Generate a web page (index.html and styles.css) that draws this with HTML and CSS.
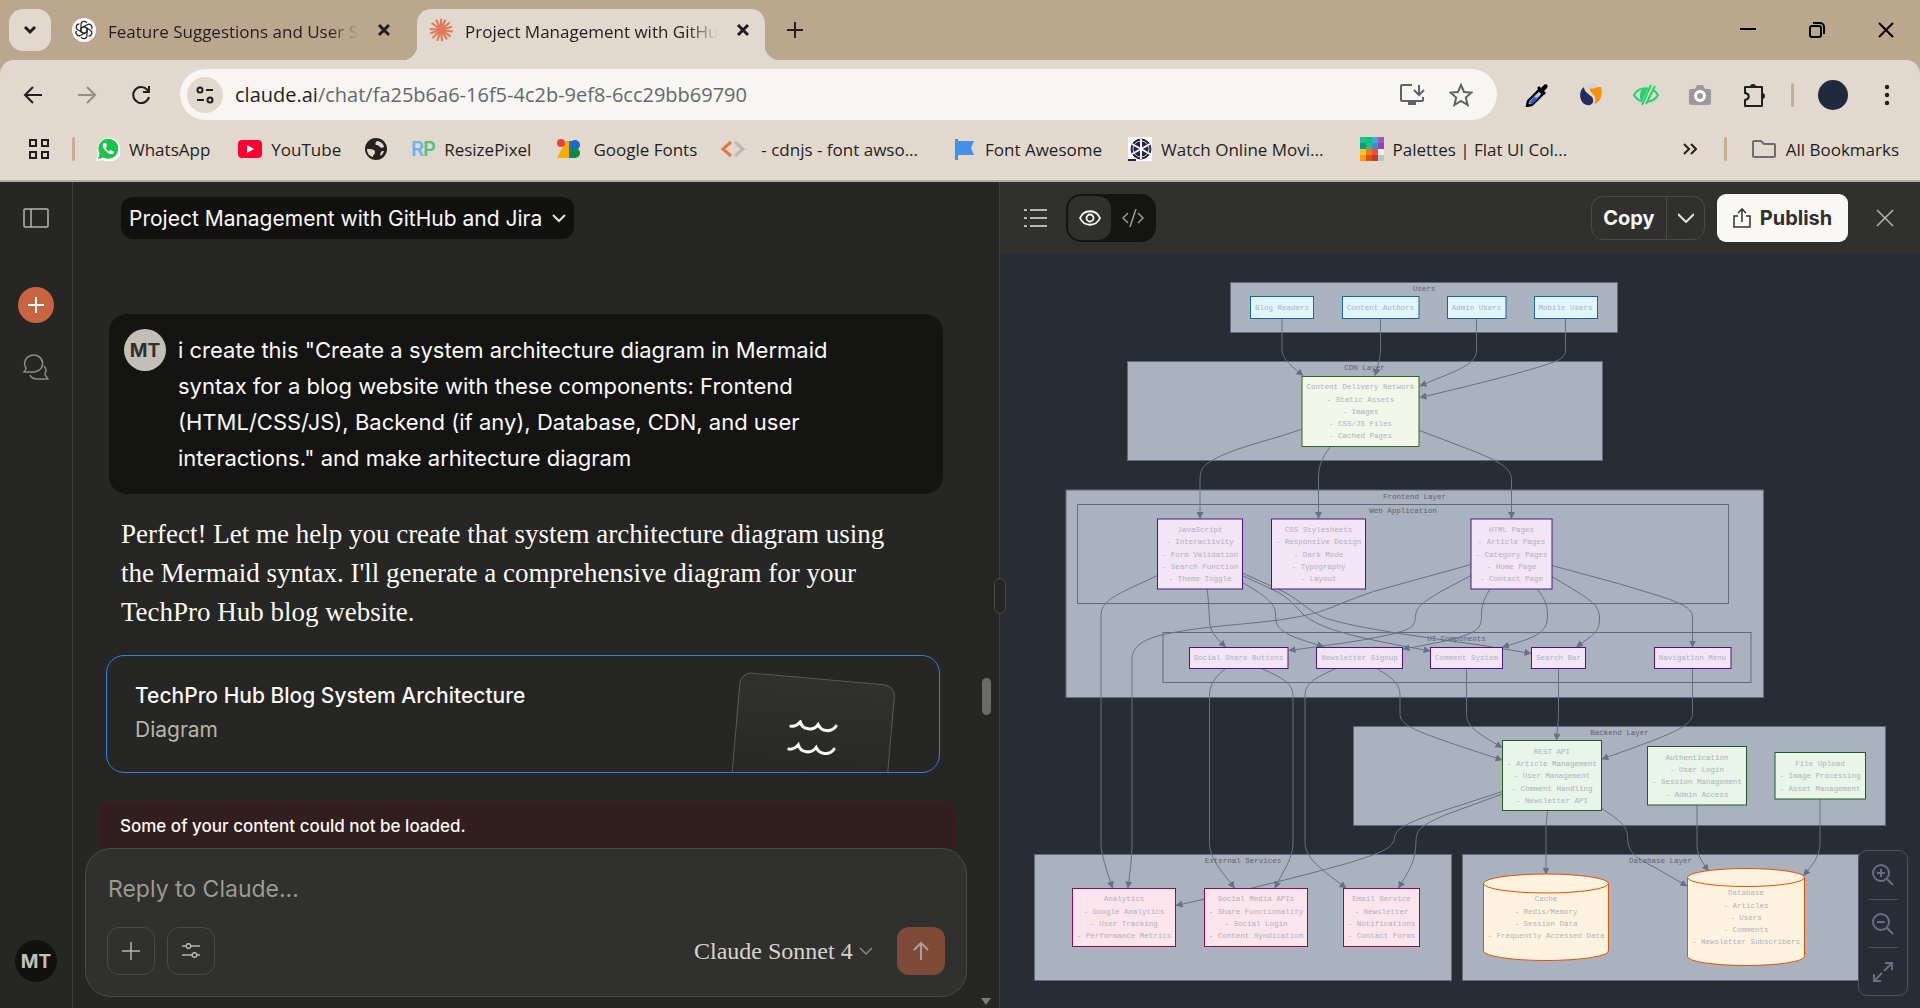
FILE: index.html
```html
<!DOCTYPE html>
<html lang="en">
<head>
<meta charset="utf-8">
<meta name="viewport" content="width=device-width, initial-scale=1">
<title>Project Management with GitHub and Jira</title>
<link rel="stylesheet" href="styles.css">
</head>
<body>
<header class="browser">
  <div class="tabstrip">
    <button class="tab-search" aria-label="Search tabs"><svg width="16" height="16" viewBox="0 0 16 16"><path d="M3 5l5 5 5-5" class="ink heavy"/></svg></button>
    <div class="tab">
      <svg width="24" height="24" viewBox="0 0 24 24"><circle cx="12" cy="12" r="12" fill="#fff"/><g fill="none" stroke="#222" stroke-width="1.2"><path id="petal" d="M9 10.300V6.500a3.200 3.200 0 0 1 6-1.500M9 10.300l3-1.800 3.500 2"/><use href="#petal" transform="rotate(60 12 12)"/><use href="#petal" transform="rotate(120 12 12)"/><use href="#petal" transform="rotate(180 12 12)"/><use href="#petal" transform="rotate(240 12 12)"/><use href="#petal" transform="rotate(300 12 12)"/></g></svg>
      <a class="tab-title" href="#">Feature Suggestions and User S</a>
      <button class="tab-close" aria-label="Close tab"><svg width="14" height="14" viewBox="0 0 14 14"><path d="M2 2l10 10M12 2L2 12" class="ink heavy"/></svg></button>
    </div>
    <div class="tab active">
      <svg width="24" height="24" viewBox="0 0 24 24"><g stroke="#e07a5a" stroke-width="2.200" stroke-linecap="round"><path d="M12 12V1.500M12 12l4-9.500M12 12l8-7M12 12l10-3M12 12l11 1.500M12 12l9 6M12 12l5.500 8.500M12 12l1 10.500M12 12l-3.500 10M12 12l-8 7.500M12 12L2 15M12 12L1.500 11M12 12L3.500 5.500M12 12L7.500 2.500"/></g></svg>
      <a class="tab-title" href="#">Project Management with GitHu</a>
      <button class="tab-close" aria-label="Close tab"><svg width="14" height="14" viewBox="0 0 14 14"><path d="M2 2l10 10M12 2L2 12" class="ink heavy"/></svg></button>
    </div>
    <button class="new-tab" aria-label="New tab"><svg width="18" height="18" viewBox="0 0 18 18"><path d="M9 1v16M1 9h16" class="ink"/></svg></button>
    <div class="window-controls">
      <button aria-label="Minimize"><svg width="16" height="16" viewBox="0 0 16 16"><path d="M0 7h16" class="ink black"/></svg></button>
      <button aria-label="Restore"><svg width="16" height="16" viewBox="0 0 16 16"><rect x="1" y="4" width="11" height="11" rx="2" class="ink black"/><path d="M4 1h7a4 4 0 0 1 4 4v7" class="ink black"/></svg></button>
      <button aria-label="Close"><svg width="16" height="16" viewBox="0 0 16 16"><path d="M1 1l14 14M15 1L1 15" class="ink black"/></svg></button>
    </div>
  </div>

  <div class="toolbar">
    <button class="nav-button" aria-label="Back"><svg width="20" height="20" viewBox="0 0 20 20"><path d="M19 10H2M10 2l-8 8 8 8" class="ink"/></svg></button>
    <button class="nav-button faded" aria-label="Forward"><svg width="20" height="20" viewBox="0 0 20 20"><path d="M1 10h17M10 2l8 8-8 8" class="ink"/></svg></button>
    <button class="nav-button" aria-label="Reload"><svg width="20" height="20" viewBox="0 0 20 20"><path d="M18 12a8 8 0 1 1-2-7.500l2 2M18 1v6h-6" class="ink"/></svg></button>
    <div class="omnibox">
      <button class="site-info" aria-label="Site information"><svg width="20" height="20" viewBox="0 0 20 20"><g class="ink"><circle cx="5" cy="5" r="2.500"/><path d="M11 5h7M2 15h7"/><circle cx="15" cy="15" r="2.500"/></g></svg></button>
      <a class="address" href="#"><span>claude.ai</span>/chat/fa25b6a6-16f5-4c2b-9ef8-6cc29bb69790</a>
      <button class="omni-action" aria-label="Install app"><svg width="26" height="24" viewBox="0 0 26 24"><g fill="none" stroke="#5f6368" stroke-width="2"><path d="M13 2H3a1 1 0 0 0-1 1v14a1 1 0 0 0 1 1h20a1 1 0 0 0 1-1v-3M20 2v9M15 7l5 5 5-5"/></g><path d="M9 18h8v4H9z" fill="#5f6368"/></svg></button>
      <button class="omni-action" aria-label="Bookmark this tab"><svg width="24" height="24" viewBox="0 0 24 24"><path d="M12 2l3 7 7.500.600-5.700 5 1.800 7.400-6.600-4-6.600 4 1.800-7.400-5.700-5L9 9z" fill="none" stroke="#5f6368" stroke-width="2"/></svg></button>
    </div>
    <div class="extensions">
      <button aria-label="Color picker"><svg width="24" height="24" viewBox="0 0 24 24"><path d="M2 23l1-5L14 7l4 4L7 22z" fill="#b9c6f5" stroke="#000" stroke-width="2.400"/><path d="M4 20l5-6 5 1-7 6z" fill="#3557d6"/><path d="M12 5l2-2 2 2 3-3c2-2 5 1 3 3l-3 3 2 2-2 2z" fill="#000"/></svg></button>
      <button aria-label="Similar sites"><svg width="24" height="24" viewBox="0 0 24 24"><path d="M5 4c-6 4-5 16 3 18 5 1 8-4 5-8-3-3-8-5-8-10z" fill="#232c5c"/><path d="M11 4h11c2 8 0 15-7 17 3-5 1-8-2-11-2-2-3-4-2-6z" fill="#f79009"/><path d="M8 4c3-5 10-4 11 0-4 2-8 2-11 0z" fill="#cfd3d6"/></svg></button>
      <button aria-label="Hide elements"><svg width="26" height="24" viewBox="0 0 26 24"><path d="M1 12C6 3 20 3 25 12 20 21 6 21 1 12z" fill="none" stroke="#22d36b" stroke-width="2"/><path d="M15 5c-10-1-9 11-6 14z" fill="#22d36b"/><path d="M20 2L10 22" stroke="#e1d9cd" stroke-width="5"/><path d="M18 2L9 22M22 3l-9 18" stroke="#22d36b" stroke-width="2"/></svg></button>
      <button aria-label="Screenshot"><svg width="24" height="24" viewBox="0 0 24 24"><rect x="1" y="6" width="22" height="16" rx="2" fill="#999"/><path d="M7 6l2-4h6l2 4z" fill="#999"/><circle cx="12" cy="13" r="4.500" fill="#999" stroke="#fff" stroke-width="3"/></svg></button>
      <button aria-label="Extensions"><svg width="26" height="26" viewBox="0 0 26 26"><path d="M4 5h17v19H4v-6c5-1 5-6 0-7z" class="ink" stroke-linejoin="round"/><path d="M9 5a3 3 0 0 1 6 0zM21 11a3 3 0 0 1 0 6z" fill="#1f1f1f"/></svg></button>
    </div>
    <span class="divider"></span>
    <button class="profile" aria-label="Profile"></button>
    <button class="kebab" aria-label="Menu"><svg width="6" height="22" viewBox="0 0 6 22"><g fill="#1f1f1f"><circle cx="3" cy="3" r="2.200"/><circle cx="3" cy="11" r="2.200"/><circle cx="3" cy="19" r="2.200"/></g></svg></button>
  </div>

  <nav class="bookmarks">
    <button class="apps" aria-label="Apps"><svg width="22" height="22" viewBox="0 0 22 22"><g class="ink"><rect x="2" y="2" width="6" height="6"/><rect x="14" y="2" width="6" height="6"/><rect x="2" y="14" width="6" height="6"/><rect x="14" y="14" width="6" height="6"/></g></svg></button>
    <span class="divider"></span>
    <a class="bm b-wa" href="#"><svg width="24" height="24" viewBox="0 0 24 24"><path d="M0 24l2-7A12 12 0 1 1 7 23z" fill="#fff"/><path d="M2 22l1.500-5.500a10 10 0 1 1 4 4z" fill="#1fc14d"/><path d="M8 6c-3 2 0 7 3 9 3 3 6 3 7 0l-3-2-2 1.500c-1-.5-3-2-3.500-4L11 9 10 6z" fill="#fff"/></svg>WhatsApp</a>
    <a class="bm b-yt" href="#"><svg width="24" height="24" viewBox="0 0 24 24"><rect y="3" width="24" height="18" rx="4" fill="#f03"/><path d="M9 8v8l7-4z" fill="#fff"/></svg>YouTube</a>
    <a class="bm b-globe" href="#" aria-label="Website"><svg width="22" height="22" viewBox="0 0 22 22"><circle cx="11" cy="11" r="11" fill="#222"/><path d="M2 11c4 0 8 0 8 3s-2 2-2 5c-4-1-6-4-6-8zM12 3c-2 2-2 3-1 4 3 0 3 1 5 3l3-1c0-3-4-6-7-6zM15 18c1-3 0-5 4-5-1 3-2 4-4 5z" fill="#e1d9cd"/></svg></a>
    <a class="bm b-rp" href="#"><svg width="26" height="24" viewBox="0 0 26 24"><text x="0" y="19" font-size="20" font-family="Inter, sans-serif" font-weight="600" fill="#69b5f0">R</text><text x="12" y="19" font-size="20" font-family="Inter, sans-serif" font-weight="600" fill="#58c27c">P</text></svg>ResizePixel</a>
    <a class="bm b-gf" href="#"><svg width="24" height="24" viewBox="0 0 24 24"><path d="M0 21L9 4h5v17z" fill="#f9ab00"/><circle cx="4" cy="6" r="4" fill="#ea4335"/><path d="M12 4h5v17h-5z" fill="#1a73e8"/><circle cx="18" cy="8" r="5" fill="#1967d2"/><circle cx="18" cy="16" r="5" fill="#0d8c3f"/></svg>Google Fonts</a>
    <a class="bm b-cdn" href="#"><svg width="24" height="24" viewBox="0 0 24 24"><path d="M10 5l-8 7 8 7" fill="none" stroke="#e8744a" stroke-width="3"/><path d="M14 5l8 7-8 7" fill="none" stroke="#bdb9b4" stroke-width="3"/></svg>- cdnjs - font awso...</a>
    <a class="bm b-fa" href="#"><svg width="22" height="24" viewBox="0 0 22 24"><path d="M1 2h3v2h16l-3 7 3 7H4v5H1z" fill="#4291e6"/></svg>Font Awesome</a>
    <a class="bm b-mov" href="#"><svg width="24" height="24" viewBox="0 0 24 24"><rect width="24" height="24" fill="#fff"/><circle cx="13" cy="12" r="10" fill="#1f2550" stroke="#222" stroke-width="1"/><path d="M13 2v20M4 7l18 10M22 7L4 17" stroke="#fff" stroke-width="2"/><circle cx="13" cy="12" r="8" fill="none" stroke="#ccd" stroke-width="1"/><path d="M0 23h8" stroke="#1f2550" stroke-width="2"/></svg>Watch Online Movi...</a>
    <a class="bm b-pal" href="#"><svg width="24" height="24" viewBox="0 0 24 24" shape-rendering="crispEdges"><path d="M0 0h6v6H0z" fill="#1abc9c"/><path d="M6 0h6v6H6z" fill="#00cc6f"/><path d="M12 0h6v6h-6z" fill="#3fa9e5"/><path d="M18 0h6v6h-6z" fill="#9b59b6"/><path d="M0 6h6v6H0z" fill="#00a085"/><path d="M6 6h6v6H6z" fill="#3fb57b"/><path d="M12 6h6v6h-6z" fill="#3a93c8"/><path d="M18 6h6v6h-6z" fill="#8e44ad"/><path d="M0 12h6v6H0z" fill="#fdc32d"/><path d="M6 12h6v6H6z" fill="#e67e22"/><path d="M12 12h6v6h-6z" fill="#fa4b3a"/><path d="M18 12h6v6h-6z" fill="#ecf0f1"/><path d="M0 18h6v6H0z" fill="#ff9d12"/><path d="M6 18h6v6H6z" fill="#dc5600"/><path d="M12 18h6v6h-6z" fill="#cb3a24"/><path d="M18 18h6v6h-6z" fill="#bdc3c7"/></svg>Palettes | Flat UI Col...</a>
    <button class="overflow" aria-label="More bookmarks"><svg width="16" height="14" viewBox="0 0 16 14"><path d="M2 2l5 5-5 5M9 2l5 5-5 5" class="ink"/></svg></button>
    <span class="divider"></span>
    <a class="bm all" href="#"><svg width="26" height="20" viewBox="0 0 26 20"><path d="M2 3a1 1 0 0 1 1-1h7l3 3h10a1 1 0 0 1 1 1v11a1 1 0 0 1-1 1H3a1 1 0 0 1-1-1z" fill="none" stroke="#6b6d70" stroke-width="2"/></svg>All Bookmarks</a>
  </nav>
</header>

<main class="app">
  <nav class="sidebar">
    <button class="side-icon toggle" aria-label="Toggle sidebar"><svg width="26" height="20" viewBox="0 0 26 20"><g class="line"><rect x="1" y="1" width="24" height="18" rx="1"/><path d="M8 1v18"/></g></svg></button>
    <button class="new-chat" aria-label="New chat"><svg width="16" height="16" viewBox="0 0 16 16"><path d="M8 0v16M0 8h16" stroke="#fff" stroke-width="2"/></svg></button>
    <button class="side-icon" aria-label="Chats"><svg width="26" height="26" viewBox="0 0 26 26"><g class="line dim"><path d="M1 18h9a9 8.500 0 1 0-7-4c0 2-1 3-2 4z"/><path d="M21 12c3 3 2 6 1 8 0 2 2 3 3 5H15c-4 0-7-1-8-4"/></g></svg></button>
    <button class="account">MT</button>
  </nav>

  <section class="chat">
    <header class="chat-header">
      <button class="chat-title">Project Management with GitHub and Jira<svg width="14" height="10" viewBox="0 0 14 10"><path d="M1 2l6 6 6-6" class="chev"/></svg></button>
    </header>
    <div class="thread">
      <article class="bubble">
        <span class="avatar">MT</span>
        <p>i create this "Create a system architecture diagram in Mermaid syntax for a blog website with these components: Frontend (HTML/CSS/JS), Backend (if any), Database, CDN, and user interactions." and make arhitecture diagram</p>
      </article>
      <p class="answer">Perfect! Let me help you create that system architecture diagram using the Mermaid syntax. I'll generate a comprehensive diagram for your TechPro Hub blog website.</p>
      <a class="artifact-card" href="#">
        <span class="artifact-text"><strong>TechPro Hub Blog System Architecture</strong><span>Diagram</span></span>
        <span class="paper"><svg width="50" height="34" viewBox="0 0 50 34"><g fill="none" stroke="#faf9f5" stroke-width="3" stroke-linecap="round"><path id="wave" d="M2 7c4 0 7-2 9-5 3 8 14 8 18 1 4 7 14 7 18 0"/><use href="#wave" y="23"/></g></svg></span>
      </a>
    </div>
    <footer class="composer-area">
      <p class="error">Some of your content could not be loaded.</p>
      <form class="composer">
        <textarea rows="1" aria-label="Message" placeholder="Reply to Claude..."></textarea>
        <div class="composer-row">
          <button type="button" class="tool" aria-label="Add"><svg width="18" height="18" viewBox="0 0 18 18"><path d="M9 0v18M0 9h18" class="line"/></svg></button>
          <button type="button" class="tool" aria-label="Tools"><svg width="18" height="16" viewBox="0 0 18 16"><g class="line"><path d="M0 3h4M9 3h9M0 12h10M15 12h3"/><circle cx="6.500" cy="3" r="2.300"/><circle cx="12.500" cy="12" r="2.300"/></g></svg></button>
          <div class="model"><select aria-label="Model"><option>Claude Sonnet 4</option></select><svg width="14" height="10" viewBox="0 0 14 10"><path d="M1 2l6 6 6-6" class="chev muted"/></svg></div>
          <button type="button" class="send" aria-label="Send"><svg width="18" height="20" viewBox="0 0 18 20"><path d="M9 19V2M2 9l7-7 7 7" fill="none" stroke="#a9a196" stroke-width="2"/></svg></button>
        </div>
      </form>
    </footer>
    <span class="scroll-thumb"></span>
    <span class="scroll-arrow"></span>
    <span class="resize-handle"></span>
  </section>

  <section class="artifact">
    <header class="artifact-header">
      <button class="plain" aria-label="Artifacts"><svg width="24" height="20" viewBox="0 0 24 20"><g class="line bold"><path d="M6 2h17M6 10h17M6 18h17M0 2h3M0 10h3M0 18h3"/></g></svg></button>
      <div class="view-switch">
        <button class="on" aria-label="Preview"><svg width="22" height="16" viewBox="0 0 22 16"><g fill="none" stroke="#faf9f5" stroke-width="1.800"><path d="M1 8c4-9 16-9 20 0-4 9-16 9-20 0z"/><circle cx="11" cy="8" r="3.500"/></g></svg></button>
        <button aria-label="Code"><svg width="22" height="18" viewBox="0 0 22 18"><path d="M6 4L1 9l5 5M16 4l5 5-5 5M14 0L8 18" fill="none" stroke="#9c9a92" stroke-width="1.500"/></svg></button>
      </div>
      <div class="copy-group">
        <button class="copy">Copy</button><button class="more" aria-label="More options"><svg width="16" height="10" viewBox="0 0 16 10"><path d="M0 1l8 8 8-8" class="chev"/></svg></button>
      </div>
      <button class="publish"><svg width="18" height="20" viewBox="0 0 18 20"><path d="M5 8H1v11h16V8h-4M9 14V1M5 5l4-4 4 4" fill="none" stroke="#30302e" stroke-width="1.500"/></svg>Publish</button>
      <button class="plain close" aria-label="Close"><svg width="18" height="18" viewBox="0 0 18 18"><path d="M1 1l16 16M17 1L1 17" class="line"/></svg></button>
    </header>
    <div class="canvas">
      <svg class="diagram" viewBox="0 0 1840 1508" role="img" aria-label="TechPro Hub Blog System Architecture">
        <defs><marker id="arrow" markerUnits="userSpaceOnUse" markerWidth="14" markerHeight="14" refX="13" refY="7" orient="auto"><path d="M0 0l14 7-14 7z" fill="#667085"/></marker></defs>
        <g class="cluster">
          <rect x="461" y="57" width="774" height="100"/>
          <rect x="255" y="215" width="950" height="198"/>
          <rect x="132" y="472" width="1395" height="415"/>
          <rect x="155" y="501" width="1302" height="198"/>
          <rect x="326" y="757" width="1176" height="100"/>
          <rect x="707" y="945" width="1064" height="198"/>
          <rect x="69" y="1201" width="834" height="252"/>
          <rect x="925" y="1201" width="792" height="252"/>
        </g>
        <g class="edge">
          <path d="M564 129V189C564 206 573 217 606 243"/>
          <path d="M761 129V190C761 205 757 220 750 243"/>
          <path d="M953 129V193C953 225 900 237 840 264"/>
          <path d="M1131 129V193C1131 205 1122 211 1102 218C1060 233 960 259 840 287"/>
          <path d="M604 350C560 367 480 385 441 404C408 420 400 428 400 452V529"/>
          <path d="M661 385C641 412 637 425 637 452V529"/>
          <path d="M839 353L939 391C1000 415 1023 428 1023 452V529"/>
          <path d="M315 643L257 670C215 690 202 702 202 725V1179C202 1200 214 1235 225 1268"/>
          <path d="M414 670C417 690 418 715 419 730C420 755 427 762 451 786"/>
          <path d="M485 657C520 678 551 695 551 720C551 750 560 760 647 785"/>
          <path d="M485 643L547 672C580 688 590 705 606 720C640 750 700 765 860 794"/>
          <path d="M485 638L560 672C600 690 615 715 653 729C720 750 860 768 960 782L1062 799"/>
          <path d="M942 621L747 675C680 698 660 710 627 719C540 741 440 739 347 757C285 768 264 785 264 812V1179C264 1210 260 1235 256 1268"/>
          <path d="M942 643L880 676C840 700 832 708 831 725C829 745 825 750 780 761C720 775 650 783 578 793"/>
          <path d="M980 670C965 695 963 705 963 725C963 755 950 765 806 790"/>
          <path d="M1075 670C1090 692 1095 702 1095 722C1095 755 1080 765 1005 786"/>
          <path d="M1104 645L1155 676C1190 698 1199 708 1199 730C1199 757 1185 762 1153 786"/>
          <path d="M1104 623L1240 660C1330 688 1385 700 1385 725V786"/>
          <path d="M451 829C425 850 419 865 419 885V1175C419 1210 440 1230 469 1268"/>
          <path d="M523 829C570 850 586 860 586 885V1179C586 1210 565 1235 550 1268"/>
          <path d="M672 829C625 850 610 860 610 885V1175C610 1205 630 1222 692 1268"/>
          <path d="M753 829C790 850 800 862 800 885V919C800 945 830 955 1004 1012"/>
          <path d="M933 829V919C933 945 950 955 1004 987"/>
          <path d="M1117 829V925L1113 972"/>
          <path d="M1385 829V919C1385 945 1345 960 1204 1010"/>
          <path d="M1005 1075L860 1122C800 1143 790 1155 789 1168C786 1185 775 1195 690 1220C590 1248 470 1277 352 1303"/>
          <path d="M1005 1080L890 1122C838 1145 833 1152 832 1175C831 1215 820 1230 797 1268"/>
          <path d="M1095 1113L1092 1145V1240"/>
          <path d="M1203 1109C1240 1132 1254 1145 1255 1165C1256 1195 1265 1205 1310 1227L1374 1264"/>
          <path d="M1394 1102V1179C1394 1200 1400 1210 1417 1234"/>
          <path d="M1640 1090V1179C1640 1200 1630 1217 1607 1243"/>
        </g>
        <g class="users">
          <rect x="501" y="85" width="126" height="44"/>
          <rect x="685" y="85" width="153" height="44"/>
          <rect x="895" y="85" width="117" height="44"/>
          <rect x="1069" y="85" width="126" height="44"/>
        </g>
        <g class="cdn"><rect x="604" y="245" width="234" height="140"/></g>
        <g class="front">
          <rect x="315" y="530" width="170" height="140"/>
          <rect x="543" y="530" width="188" height="140"/>
          <rect x="942" y="530" width="162" height="140"/>
          <rect x="379" y="787" width="197" height="42"/>
          <rect x="633" y="787" width="172" height="42"/>
          <rect x="861" y="787" width="144" height="42"/>
          <rect x="1063" y="787" width="108" height="42"/>
          <rect x="1309" y="787" width="153" height="42"/>
        </g>
        <g class="back">
          <rect x="1005" y="973" width="198" height="140"/>
          <rect x="1295" y="985" width="198" height="117"/>
          <rect x="1550" y="997" width="181" height="93"/>
        </g>
        <g class="ext">
          <rect x="145" y="1269" width="206" height="116"/>
          <rect x="409" y="1269" width="206" height="116"/>
          <rect x="687" y="1269" width="152" height="116"/>
        </g>
        <g class="store">
          <path d="M967 1259V1394A125 19 0 0 0 1217 1394V1259A125 19 0 0 0 967 1259A125 19 0 0 0 1217 1259"/>
          <path d="M1375 1247V1405A117 18 0 0 0 1609 1405V1247A117 18 0 0 0 1375 1247A117 18 0 0 0 1609 1247"/>
        </g>
        <g class="cluster-label">
          <text x="848" y="74">Users</text>
          <text x="729" y="232">CDN Layer</text>
          <text x="829" y="490">Frontend Layer</text>
          <text x="806" y="518">Web Application</text>
          <text x="913" y="774">UI Components</text>
          <text x="1239" y="962">Backend Layer</text>
          <text x="486" y="1218">External Services</text>
          <text x="1321" y="1218">Database Layer</text>
        </g>
        <g class="node-label">
          <text x="564" y="112">Blog Readers</text>
          <text x="761" y="112">Content Authors</text>
          <text x="953" y="112">Admin Users</text>
          <text x="1131" y="112">Mobile Users</text>
          <text y="270"><tspan x="721">Content Delivery Network</tspan><tspan x="721" dy="25">- Static Assets</tspan><tspan x="721" dy="24">- Images</tspan><tspan x="721" dy="25">- CSS/JS Files</tspan><tspan x="721" dy="24">- Cached Pages</tspan></text>
          <text y="556"><tspan x="400">JavaScript</tspan><tspan x="400" dy="24">- Interactivity</tspan><tspan x="400" dy="25">- Form Validation</tspan><tspan x="400" dy="25">- Search Function</tspan><tspan x="400" dy="24">- Theme Toggle</tspan></text>
          <text y="556"><tspan x="637">CSS Stylesheets</tspan><tspan x="637" dy="24">- Responsive Design</tspan><tspan x="637" dy="25">- Dark Mode</tspan><tspan x="637" dy="25">- Typography</tspan><tspan x="637" dy="24">- Layout</tspan></text>
          <text y="556"><tspan x="1023">HTML Pages</tspan><tspan x="1023" dy="24">- Article Pages</tspan><tspan x="1023" dy="25">- Category Pages</tspan><tspan x="1023" dy="25">- Home Page</tspan><tspan x="1023" dy="24">- Contact Page</tspan></text>
          <text x="477" y="812">Social Share Buttons</text>
          <text x="719" y="812">Newsletter Signup</text>
          <text x="933" y="812">Comment System</text>
          <text x="1117" y="812">Search Bar</text>
          <text x="1385" y="812">Navigation Menu</text>
          <text y="1000"><tspan x="1104">REST API</tspan><tspan x="1104" dy="24">- Article Management</tspan><tspan x="1104" dy="24">- User Management</tspan><tspan x="1104" dy="26">- Comment Handling</tspan><tspan x="1104" dy="24">- Newsletter API</tspan></text>
          <text y="1012"><tspan x="1394">Authentication</tspan><tspan x="1394" dy="24">- User Login</tspan><tspan x="1394" dy="24">- Session Management</tspan><tspan x="1394" dy="26">- Admin Access</tspan></text>
          <text y="1024"><tspan x="1640">File Upload</tspan><tspan x="1640" dy="24">- Image Processing</tspan><tspan x="1640" dy="26">- Asset Management</tspan></text>
          <text y="1294"><tspan x="248">Analytics</tspan><tspan x="248" dy="26">- Google Analytics</tspan><tspan x="248" dy="24">- User Tracking</tspan><tspan x="248" dy="24">- Performance Metrics</tspan></text>
          <text y="1294"><tspan x="512">Social Media APIs</tspan><tspan x="512" dy="26">- Share Functionality</tspan><tspan x="512" dy="24">- Social Login</tspan><tspan x="512" dy="24">- Content Syndication</tspan></text>
          <text y="1294"><tspan x="763">Email Service</tspan><tspan x="763" dy="26">- Newsletter</tspan><tspan x="763" dy="24">- Notifications</tspan><tspan x="763" dy="24">- Contact Forms</tspan></text>
          <text y="1294"><tspan x="1092">Cache</tspan><tspan x="1092" dy="26">- Redis/Memory</tspan><tspan x="1092" dy="24">- Session Data</tspan><tspan x="1092" dy="24">- Frequently Accessed Data</tspan></text>
          <text y="1282"><tspan x="1492">Database</tspan><tspan x="1492" dy="26">- Articles</tspan><tspan x="1492" dy="24">- Users</tspan><tspan x="1492" dy="24">- Comments</tspan><tspan x="1492" dy="24">- Newsletter Subscribers</tspan></text>
        </g>
      </svg>
      <div class="zoom-tools">
        <button aria-label="Zoom in"><svg width="22" height="22" viewBox="0 0 22 22"><path d="M15 15l6 6M9 5v8M5 9h8"/><circle cx="9" cy="9" r="8"/></svg></button>
        <button aria-label="Zoom out"><svg width="22" height="22" viewBox="0 0 22 22"><path d="M15 15l6 6M5 9h8"/><circle cx="9" cy="9" r="8"/></svg></button>
        <button aria-label="Fit to screen"><svg width="22" height="22" viewBox="0 0 22 22"><path d="M13 2h7v7M20 2l-8 8M2 13v7h7M2 20l8-8"/></svg></button>
      </div>
    </div>
  </section>
</main>
</body>
</html>
```
FILE: styles.css
```css
* { box-sizing: border-box; }

body {
  margin: 0;
  height: 100vh;
  display: flex;
  flex-direction: column;
  overflow: hidden;
  background: #262624;
  font-family: "Inter", "Liberation Sans", sans-serif;
}

button {
  margin: 0;
  padding: 0;
  border: 0;
  background: none;
  color: inherit;
  font: inherit;
  display: flex;
  align-items: center;
  justify-content: center;
}

a { color: inherit; text-decoration: none; }
p { margin: 0; }
svg { display: block; flex: none; }

.ink { fill: none; stroke: #1f1f1f; stroke-width: 2; }
.heavy { stroke-width: 3; }
.black { stroke: #000; }
.line { fill: none; stroke: #b8b5a9; stroke-width: 1.5; }
.line.dim { stroke: #8d8b82; }
.line.bold { stroke-width: 2; }
.chev { fill: none; stroke: #e6e4da; stroke-width: 2; }
.chev.muted { stroke: #8b8981; stroke-width: 1.5; }

/* Browser window */
.browser {
  flex: none;
  background: #bba78e;
  color: #1f1f1f;
  font-family: "Open Sans", "Noto Sans", sans-serif;
  border-bottom: 2px solid #b3aba2;
}

.tabstrip { display: flex; height: 60px; padding-left: 9px; }

.tab-search {
  width: 42px;
  height: 42px;
  margin: 9px 9px 0 0;
  border-radius: 14px;
  background: #e1d9cd;
}

.tab {
  display: flex;
  align-items: center;
  width: 348px;
  height: 42px;
  margin-top: 9px;
  padding: 0 17px 0 12px;
}

.tab.active {
  position: relative;
  height: 51px;
  margin-left: 9px;
  padding-bottom: 9px;
  border-radius: 14px 14px 0 0;
  background: #e1d9cd;
}

.tab.active::before,
.tab.active::after {
  content: "";
  position: absolute;
  bottom: 0;
  width: 14px;
  height: 14px;
}

.tab.active::before {
  right: 100%;
  background: radial-gradient(circle at 0 0, transparent 14px, #e1d9cd 14px);
}

.tab.active::after {
  left: 100%;
  background: radial-gradient(circle at 100% 0, transparent 14px, #e1d9cd 14px);
}

.tab-title {
  flex: 1;
  margin: 0 18px 0 12px;
  padding-top: 3px;
  white-space: nowrap;
  font-size: 17px;
  line-height: 24px;
  mask-image: linear-gradient(to right, #000 88%, transparent);
}

.tab-close { width: 14px; height: 24px; }

.new-tab { width: 42px; height: 42px; margin: 9px 0 0 9px; }

.window-controls { display: flex; margin-left: auto; }
.window-controls button { width: 69px; height: 60px; }

.toolbar {
  display: flex;
  align-items: center;
  height: 69px;
  padding: 0 9px;
  border-radius: 14px 14px 0 0;
  background: #e1d9cd;
}

.nav-button { width: 54px; height: 48px; margin-left: -3px; }
.nav-button + .nav-button { margin-left: 0; }
.nav-button.faded { opacity: 0.4; }

.omnibox {
  display: flex;
  align-items: center;
  flex: 1;
  height: 51px;
  margin-left: 12px;
  padding: 0 24px 0 7px;
  border-radius: 26px;
  background: #f7f6f2;
}

.site-info {
  width: 36px;
  height: 36px;
  margin-right: 12px;
  border-radius: 50%;
  background: #e1d9cd;
}

.address { flex: 1; font-size: 20px; line-height: 26px; color: #66686b; }
.address span { color: #1f1f1f; }
.omni-action { margin-left: 24px; }

.extensions { display: flex; justify-content: space-between; width: 243px; margin: 0 24px 0 27px; }
.extensions button { width: 26px; }

.divider { flex: none; width: 3px; height: 24px; border-radius: 2px; background: #c4ae92; }

.profile { width: 30px; height: 30px; margin-left: 24px; border-radius: 50%; background: #1f2a3f; }
.kebab { width: 6px; margin: 0 21px 0 36px; }

.bookmarks {
  display: flex;
  align-items: center;
  height: 51px;
  padding: 0 21px 11px 28px;
  background: #e1d9cd;
  font-size: 17px;
}

.bookmarks .apps { margin-right: 22px; }
.bm { display: flex; align-items: center; gap: 9px; margin-left: 24px; white-space: nowrap; }
.b-wa { margin-left: 21px; }
.b-yt { margin-left: 28px; }
.b-rp { gap: 7px; }
.b-gf { gap: 12px; margin-left: 26px; }
.b-cdn { gap: 16px; }
.b-fa, .b-pal { margin-left: 36px; }
.b-mov { margin-left: 26px; }
.overflow { margin: 0 26px 0 auto; }

/* Application */
.app {
  flex: 1;
  min-height: 0;
  display: grid;
  grid-template-columns: 73px minmax(0, 927fr) minmax(0, 920fr);
  color: #faf9f5;
}

.sidebar {
  display: flex;
  flex-direction: column;
  align-items: center;
  padding-bottom: 26px;
  border-right: 1px solid #40403d;
}

.side-icon { width: 36px; height: 36px; }
.side-icon.toggle { margin: 18px 0 51px; }
.new-chat { width: 36px; height: 36px; margin-bottom: 26px; border-radius: 50%; background: #c96442; }

.account {
  width: 42px;
  height: 42px;
  margin-top: auto;
  border-radius: 50%;
  background: #11110f;
  color: #c2c0b6;
  font-size: 19px;
  font-weight: 700;
}

.chat {
  position: relative;
  display: flex;
  flex-direction: column;
  min-height: 0;
  border-right: 1px solid #40403d;
}

.chat-header { display: flex; align-items: center; height: 72px; padding: 0 48px; }

.chat-title {
  gap: 10px;
  height: 42px;
  padding: 0 8px;
  border-radius: 12px;
  background: #11110f;
  font-size: 21px;
}

.thread { flex: 1; min-height: 0; overflow: hidden; padding: 60px 56px 0 33px; }

.bubble {
  display: flex;
  gap: 12px;
  margin-left: 3px;
  padding: 15px 48px 15px 15px;
  border-radius: 18px;
  background: #141413;
}

.bubble p { padding: 3px 0; font-size: 22px; line-height: 36px; }

.avatar {
  flex: none;
  display: flex;
  align-items: center;
  justify-content: center;
  width: 42px;
  height: 42px;
  border-radius: 50%;
  background: #c2c0b6;
  color: #30302e;
  font-size: 19px;
  font-weight: 700;
}

.answer {
  margin: 21px 0 23px 15px;
  padding-right: 42px;
  font-family: "Liberation Serif", serif;
  font-size: 27px;
  line-height: 39px;
}

.artifact-card {
  display: flex;
  justify-content: space-between;
  height: 118px;
  margin-right: 3px;
  padding: 0 52px 0 28px;
  overflow: hidden;
  border: 1px solid #2c84db;
  border-radius: 18px;
}

.artifact-text { display: flex; flex-direction: column; gap: 4px; padding-top: 25px; font-size: 21px; line-height: 30px; }
.artifact-text strong { font-weight: 500; }
.artifact-text span { color: #b8b5a9; }

.paper {
  display: flex;
  justify-content: center;
  width: 156px;
  height: 210px;
  margin-top: 22px;
  padding-top: 42px;
  border: 1px solid #5a5a56;
  border-radius: 12px;
  background: linear-gradient(#30302e, #262624 60%);
  transform: rotate(5deg);
}

.composer-area { padding: 0 32px 11px 12px; }

.error {
  margin: 0 12px;
  padding: 13px 22px 11px;
  border: 1px solid #47191a;
  border-bottom: 0;
  border-radius: 18px 18px 0 0;
  background: #321e1e;
  font-size: 17px;
  font-weight: 500;
  line-height: 22px;
}

.composer {
  display: flex;
  flex-direction: column;
  gap: 21px;
  margin: 0;
  padding: 23px 21px 21px;
  border: 1px solid #4a4a46;
  border-radius: 26px;
  background: #30302e;
}

.composer textarea {
  height: 34px;
  margin: 0;
  padding: 0 1px;
  border: 0;
  outline: 0;
  resize: none;
  overflow: hidden;
  background: none;
  color: #faf9f5;
  font: 23px/34px "Inter", "Liberation Sans", sans-serif;
}

.composer textarea::placeholder { color: #9c9a92; opacity: 1; }

.composer-row { display: flex; align-items: center; gap: 12px; }
.tool { width: 48px; height: 48px; border: 1px solid #4a4a46; border-radius: 12px; }

.model { display: flex; align-items: center; gap: 6px; margin: 0 12px 0 auto; }

.model select {
  appearance: none;
  padding: 0;
  border: 0;
  background: none;
  color: #d6d4ca;
  font: 24px/30px "Liberation Serif", serif;
}

.send { width: 48px; height: 48px; border-radius: 12px; background: #7f4a37; }

/* Overlays on the chat column's edge */
.scroll-thumb { position: absolute; right: 8px; top: 60%; width: 9px; height: 37px; border-radius: 5px; background: #6b6a64; }

.scroll-arrow {
  position: absolute;
  right: 8px;
  bottom: 3px;
  border: 5px solid transparent;
  border-top: 7px solid #7d7c75;
  border-bottom: 0;
}

.resize-handle {
  position: absolute;
  z-index: 1;
  right: -7px;
  top: 48%;
  width: 12px;
  height: 36px;
  border: 1px solid #4a4a46;
  border-radius: 6px;
  background: #262624;
}

/* Artifact panel */
.artifact { display: flex; flex-direction: column; min-height: 0; background: #282c34; }

.artifact-header {
  display: flex;
  align-items: center;
  flex: none;
  height: 72px;
  padding: 0 26px 0 24px;
  background: #30302e;
  font-size: 20px;
  font-weight: 700;
}

.view-switch { display: flex; margin-left: 18px; padding: 2px; border-radius: 15px; background: #141413; }
.view-switch button { width: 43px; height: 44px; border-radius: 13px; }
.view-switch .on { background: #30302e; }

.copy-group {
  display: flex;
  height: 44px;
  margin: 0 12px 0 auto;
  border: 1px solid #4a4a46;
  border-radius: 12px;
}

.copy { width: 75px; border-right: 1px solid #4a4a46; }
.more { width: 37px; }

.publish {
  gap: 9px;
  width: 131px;
  height: 48px;
  margin-right: 28px;
  border-radius: 9px;
  background: #faf9f5;
  color: #30302e;
}

.canvas { position: relative; flex: 1; min-height: 0; }
.diagram { width: 100%; height: 100%; }

.cluster rect { fill: #abb2bf; stroke: #626b7d; stroke-width: 2; }
.edge path { fill: none; stroke: #667085; stroke-width: 2; marker-end: url(#arrow); }

.users, .cdn, .front, .back, .ext, .store { stroke-width: 2; }
.users { fill: #e1f5fe; stroke: #1565a5; }
.cdn { fill: #f1f8e9; stroke: #33691e; }
.front { fill: #f3e5f5; stroke: #4a148c; }
.back { fill: #e8f5e8; stroke: #1b5e20; }
.ext { fill: #fce4ec; stroke: #880e4f; }
.store { fill: #fff3e0; stroke: #e65100; }

.cluster-label, .node-label { font-family: "Liberation Mono", monospace; font-size: 15px; text-anchor: middle; }
.cluster-label { fill: #5c6370; }
.node-label { fill: #abb2bf; }

.zoom-tools {
  position: absolute;
  right: 12px;
  bottom: 12px;
  width: 50px;
  padding: 0 9px;
  border: 1px solid #4b5263;
  border-radius: 9px;
  background: #282c34;
}

.zoom-tools button { width: 30px; height: 48px; }
.zoom-tools button + button { border-top: 1px solid #4b5263; }
.zoom-tools svg { fill: none; stroke: #667085; stroke-width: 2; }
```
